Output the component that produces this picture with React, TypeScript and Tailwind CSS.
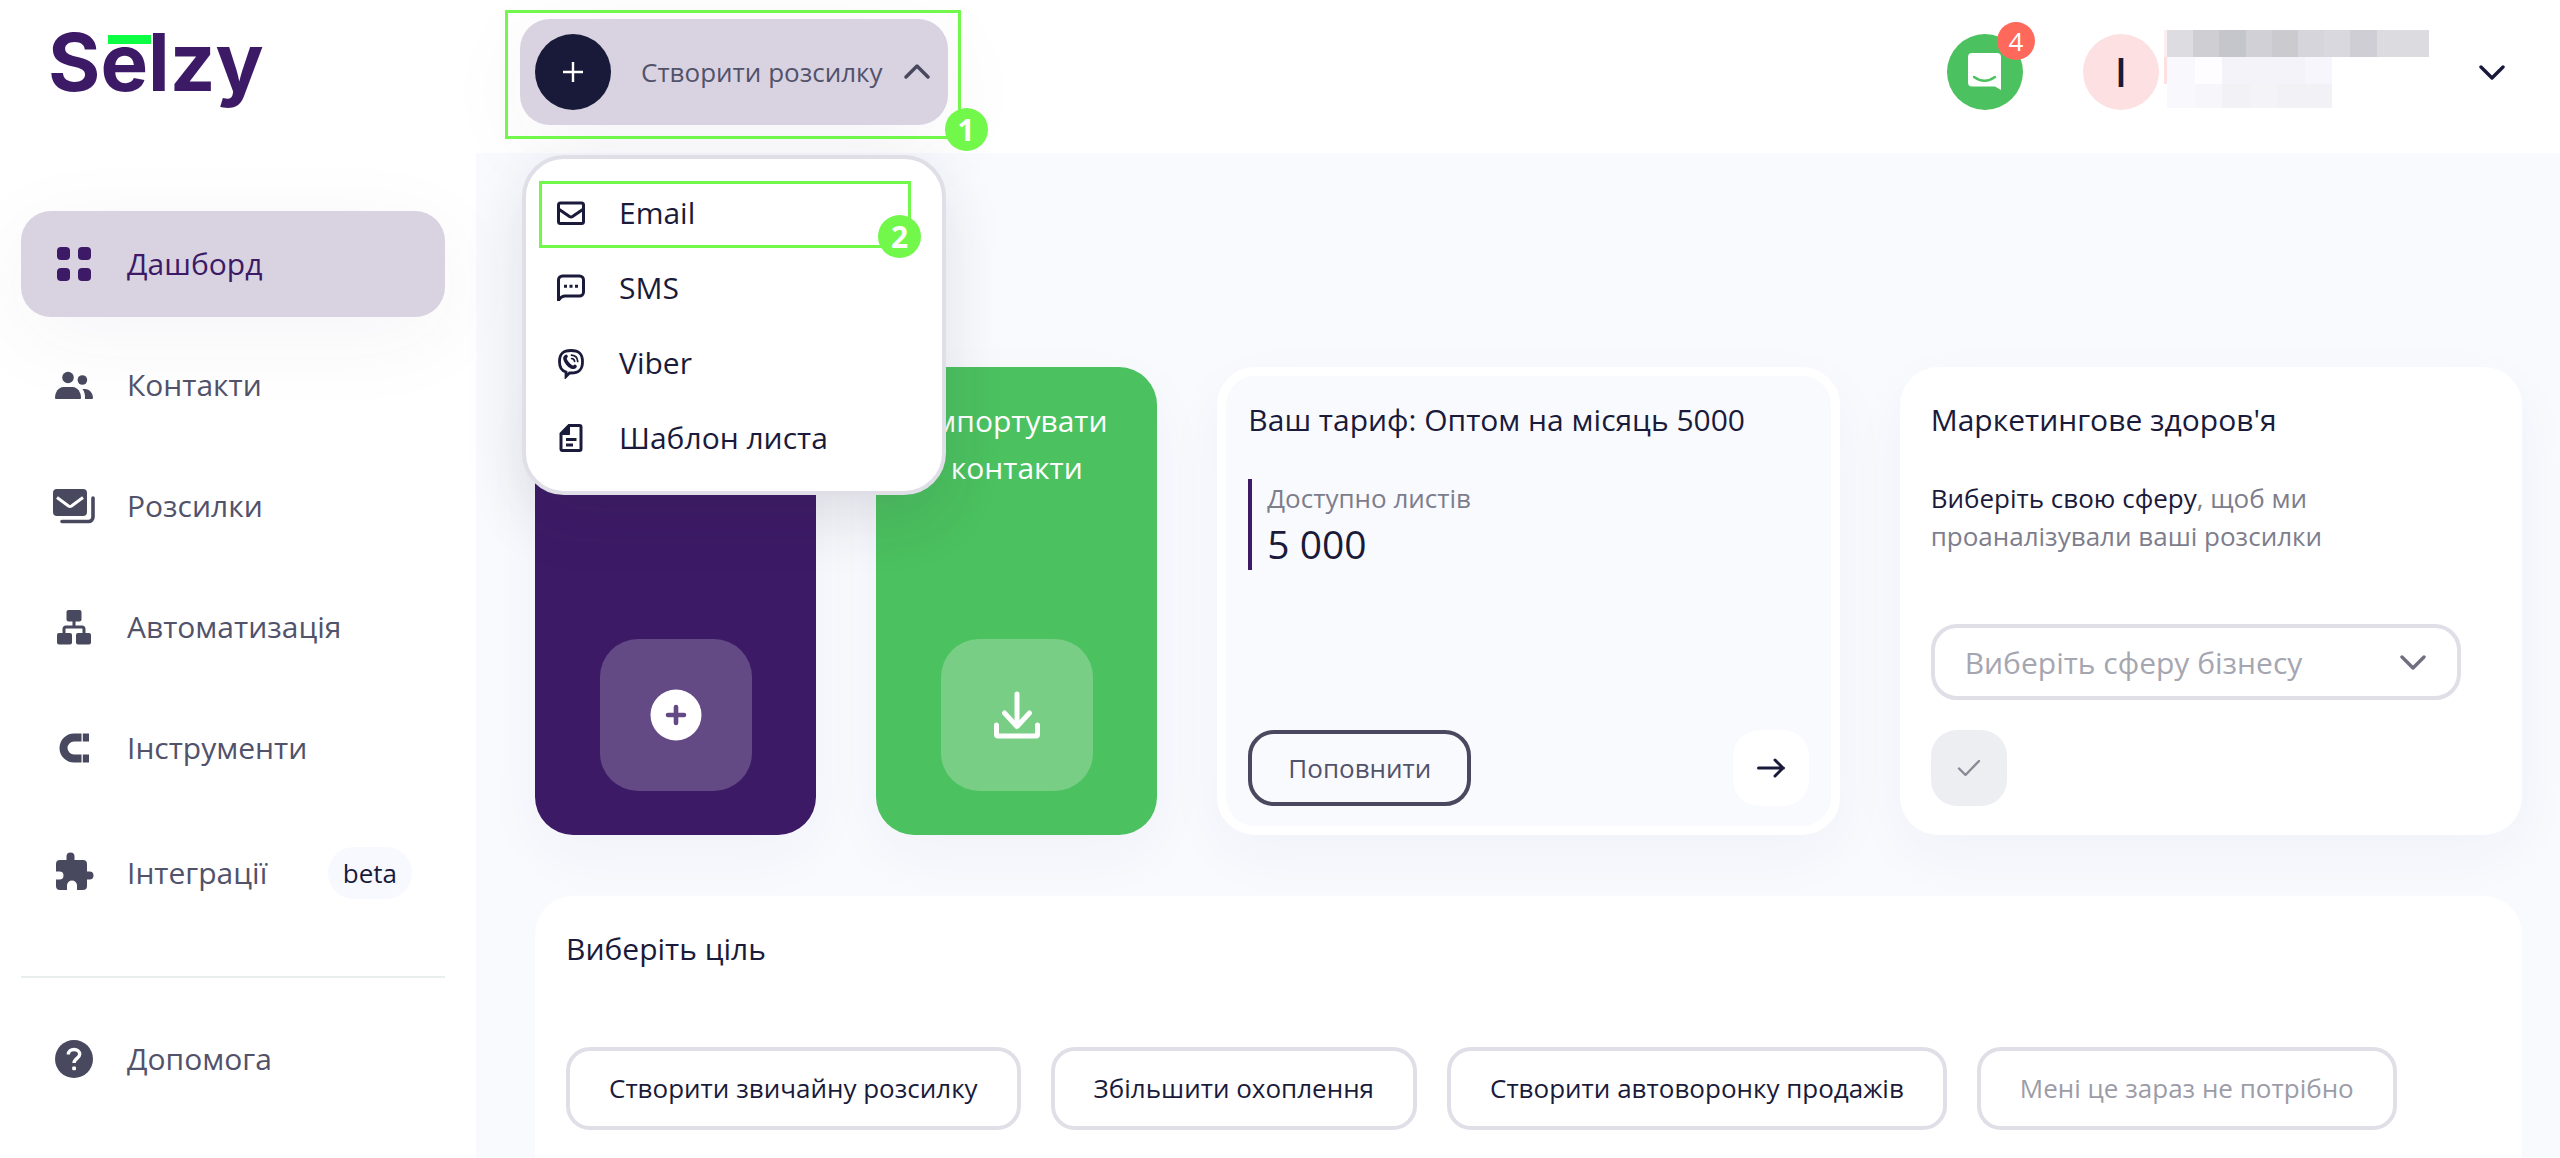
import { useState } from 'react'
import type { ReactNode } from 'react'
import clsx from 'clsx'

interface IconProps {
  className?: string
}

interface NavItem {
  label: string
  icon: ReactNode
  badge?: string
}

// --- Іконки бічного меню ---

function DashboardIcon() {
  return (
    <svg className="size-10 shrink-0" viewBox="0 0 40 40" fill="currentColor">
      <rect x="3" y="3" width="13" height="13" rx="4" />
      <rect x="24" y="3" width="13" height="13" rx="4" />
      <rect x="3" y="24" width="13" height="13" rx="4" />
      <rect x="24" y="24" width="13" height="13" rx="4" />
    </svg>
  )
}

function ContactsIcon() {
  return (
    <svg className="size-10 shrink-0" viewBox="0 0 40 40" fill="currentColor">
      <circle cx="14" cy="12.5" r="5.8" />
      <circle cx="28.4" cy="15" r="4.8" />
      <path d="M1 33c0-6 3.500-11 8.500-11h9c5 0 8.500 5 8.500 11a1 1 0 0 1-1 1H2a1 1 0 0 1-1-1z" />
      <path d="M28.500 24h2.500c4.500 0 8 4 8 9a1 1 0 0 1-1 1h-7c.3-4-.5-7.500-2.500-10z" />
    </svg>
  )
}

function MailingsIcon() {
  return (
    <svg className="size-11 shrink-0" viewBox="0 0 44 44">
      <rect x="1" y="5" width="34" height="27" rx="4" fill="currentColor" />
      <path d="M5 13.500l11.500 8.500q1.500 1 3 0L31 13.500" fill="none" stroke="#fff" strokeWidth="3" />
      <path
        d="M41 14v19a4.500 4.500 0 0 1-4.500 4.500H10"
        fill="none"
        stroke="currentColor"
        strokeWidth="3.600"
        strokeLinecap="round"
      />
    </svg>
  )
}

function AutomationIcon() {
  return (
    <svg className="size-10 shrink-0" viewBox="0 0 40 40" fill="currentColor">
      <rect x="12.500" y="3" width="15" height="11.500" rx="2" />
      <rect x="3" y="26" width="15" height="11.500" rx="2" />
      <rect x="22" y="26" width="15" height="11.500" rx="2" />
      <path d="M20 13v7M10 27v-5a2 2 0 0 1 2-2h16a2 2 0 0 1 2 2v5" fill="none" stroke="currentColor" strokeWidth="3" />
    </svg>
  )
}

function ToolsIcon() {
  return (
    <svg className="size-10 shrink-0" viewBox="0 0 40 40" fill="none" stroke="currentColor" strokeWidth="8">
      <path d="M27.500 9.500H20a10.500 10.500 0 0 0 0 21h7.500" />
      <path d="M28.800 9.500H35M28.800 30.500H35" />
    </svg>
  )
}

function IntegrationsIcon() {
  return (
    <svg className="size-11 shrink-0" viewBox="0 0 44 44" fill="currentColor">
      <path d="M14.500 9V5.500a4 4 0 0 1 8 0V9H31a4 4 0 0 1 4 4v7.500h2.500a4 4 0 0 1 0 8H35V35a4 4 0 0 1-4 4h-6v-4.500a5 5 0 0 0-10 0V39H8a4 4 0 0 1-4-4v-6.500h3.500a4 4 0 0 0 0-8H4V13a4 4 0 0 1 4-4z" />
    </svg>
  )
}

function HelpIcon() {
  return (
    <svg className="size-10 shrink-0" viewBox="0 0 40 40">
      <circle cx="20" cy="20" r="19" fill="currentColor" />
      <path
        d="M14.300 15.500c0-3.300 2.600-5 5.700-5s5.700 1.800 5.700 4.800c0 4-5.700 4.200-5.700 8.700"
        fill="none"
        stroke="#fff"
        strokeWidth="3.400"
      />
      <rect x="18.200" y="27.500" width="3.800" height="3.800" rx="1" fill="#fff" />
    </svg>
  )
}

// --- Іконки випадного меню ---

function EmailIcon() {
  return (
    <svg className="size-8 shrink-0" viewBox="0 0 32 32" fill="none" stroke="currentColor" strokeWidth="3">
      <rect x="3.500" y="6" width="25" height="20.500" rx="2" />
      <path d="M3.500 12l11 7.600q1.500 1 3 0l11-7.600" />
    </svg>
  )
}

function SmsIcon() {
  return (
    <svg className="size-8 shrink-0" viewBox="0 0 32 32" fill="none" stroke="currentColor" strokeWidth="3">
      <path d="M3.500 29V8a4 4 0 0 1 4-4h17a4 4 0 0 1 4 4v12a4 4 0 0 1-4 4H10q-3.500 0-6.500 4z" />
      <path d="M9 14.200h3M14.500 14.200h3M20 14.200h3" />
    </svg>
  )
}

function ViberIcon() {
  return (
    <svg className="size-8 shrink-0" viewBox="0 0 32 32" fill="none" stroke="currentColor">
      <path
        d="M16 3.500c7.500 0 11.500 2.500 11.500 11.200S23.500 26 16 26h-1.500L11 29.500V25c-4.600-1.300-6.500-4.500-6.500-10.300C4.500 6 8.500 3.500 16 3.500z"
        strokeWidth="2.800"
      />
      <path d="M11 9.500c-2 1.200-.8 4.200 1.500 7s5.800 5 7.500 2.800" strokeWidth="3.600" strokeLinecap="round" />
      <path d="M16.500 8.200c3.800.3 6 2.500 6.200 6.300M16.700 11.500c1.800.2 2.700 1.100 2.900 2.900" strokeWidth="1.700" strokeLinecap="round" />
    </svg>
  )
}

function TemplateIcon() {
  return (
    <svg className="size-8 shrink-0" viewBox="0 0 32 32" fill="none" stroke="currentColor" strokeWidth="3">
      <path d="M14 3.500h10.500a1.500 1.500 0 0 1 1.500 1.500v22a1.500 1.500 0 0 1-1.500 1.500h-17A1.500 1.500 0 0 1 6 27V11.500z" />
      <path d="M14.500 3v9.500H5.500z" fill="currentColor" strokeWidth="1" />
      <path d="M11 17.500h10.500M11 23h7" />
    </svg>
  )
}

function ChevronIcon({ className }: IconProps) {
  return (
    <svg className={clsx('h-[18px] w-[26px] shrink-0', className)} viewBox="0 0 26 18" fill="none" stroke="currentColor">
      <path d="M2 4l11 11L24 4" strokeWidth="3.400" strokeLinecap="round" strokeLinejoin="round" />
    </svg>
  )
}

const NAV_ITEMS: NavItem[] = [
  { label: 'Дашборд', icon: <DashboardIcon /> },
  { label: 'Контакти', icon: <ContactsIcon /> },
  { label: 'Розсилки', icon: <MailingsIcon /> },
  { label: 'Автоматизація', icon: <AutomationIcon /> },
  { label: 'Інструменти', icon: <ToolsIcon /> },
  { label: 'Інтеграції', icon: <IntegrationsIcon />, badge: 'beta' },
]

const MENU_ITEMS = [
  { label: 'Email', icon: <EmailIcon /> },
  { label: 'SMS', icon: <SmsIcon /> },
  { label: 'Viber', icon: <ViberIcon /> },
  { label: 'Шаблон листа', icon: <TemplateIcon /> },
]

const GOALS = [
  { label: 'Створити звичайну розсилку' },
  { label: 'Збільшити охоплення' },
  { label: 'Створити автоворонку продажів' },
  { label: 'Мені це зараз не потрібно', muted: true },
]

function NavLink({ item, active }: { item: NavItem; active?: boolean }) {
  return (
    <a
      href="#"
      className={clsx(
        'flex items-center rounded-[30px] py-[31px] pr-[33px] pl-[31px] text-[30px] leading-[44px]',
        active ? 'bg-[#d9d3e1] text-[#3d1a66] shadow-[0_20px_90px_rgba(60,50,110,0.05)]' : 'text-[#52526b]'
      )}
    >
      <span className={clsx('flex w-11 justify-center', !active && 'text-[#48485f]')}>{item.icon}</span>
      <span className="ml-[31px]">{item.label}</span>
      {item.badge && (
        <span className="ml-auto flex h-[52px] items-center rounded-full bg-[#f8f9fe] px-[15px] text-[26px] text-[#1a1a3a]">
          {item.badge}
        </span>
      )}
    </a>
  )
}

function Sidebar() {
  return (
    <aside className="flex w-[476px] shrink-0 flex-col bg-white pr-[31px] pl-[21px]">
      <a
        href="#"
        className="relative mt-1 mb-[91px] ml-[27px] self-start font-['Inter',sans-serif] text-[80px] leading-[116px] font-bold text-[#3d1a66]"
      >
        Selzy
        <span className="absolute top-[31px] left-[60px] h-[9px] w-[43px] bg-[#0dff43]" />
      </a>
      <nav className="flex flex-col gap-[15px]">
        {NAV_ITEMS.map((item, i) => (
          <NavLink key={item.label} item={item} active={i === 0} />
        ))}
      </nav>
      <hr className="mt-[46px] mb-7 border-t-2 border-[#e9eeef]" />
      <NavLink item={{ label: 'Допомога', icon: <HelpIcon /> }} />
    </aside>
  )
}

function StepBadge({ n, className }: { n: number; className: string }) {
  return (
    <span
      className={clsx(
        'absolute flex size-[43px] items-center justify-center rounded-full bg-[#72f84b] text-[30px] leading-none font-bold text-white',
        className
      )}
    >
      {n}
    </span>
  )
}

function CreateMenu() {
  const [open, setOpen] = useState(true)

  return (
    <div className="relative z-10">
      <button
        onClick={() => setOpen(!open)}
        aria-expanded={open}
        className="flex h-[106px] items-center rounded-[30px] bg-[#d9d3e1] pr-[18px] pl-[15px] text-[26px] text-[#52526b] shadow-[0_20px_90px_rgba(60,50,110,0.05)]"
      >
        <span className="flex size-[76px] items-center justify-center rounded-full bg-[#191a39]">
          <svg className="size-5" viewBox="0 0 20 20" stroke="#fff" strokeWidth="2.400">
            <path d="M10 0v20M0 10h20" />
          </svg>
        </span>
        <span className="mr-[21px] ml-[30px]">Створити розсилку</span>
        <ChevronIcon className={clsx('text-[#48485f]', open && 'rotate-180')} />
      </button>

      {/* Крок 1 */}
      <div className="pointer-events-none absolute -top-[9px] -right-[13px] -bottom-[14px] -left-[15px] border-[3px] border-[#72f84b]">
        <StepBadge n={1} className="-right-[30px] -bottom-[15px]" />
      </div>

      {open && (
        <ul className="absolute top-[136px] left-0.5 w-[424px] rounded-[42px] border-4 border-[#e0dfe8] bg-white py-4 shadow-[0_24px_60px_rgba(40,40,60,0.12)]">
          {MENU_ITEMS.map((item, i) => (
            <li key={item.label} className="relative">
              <button className="flex h-[75px] w-full items-center gap-8 pl-[29px] text-left text-[30px] text-[#1a1a3a]">
                {item.icon}
                {item.label}
              </button>
              {/* Крок 2 */}
              {i === 0 && (
                <div className="pointer-events-none absolute top-1.5 right-[31px] bottom-0.5 left-[13px] border-[3px] border-[#72f84b]">
                  <StepBadge n={2} className="-right-[13px] -bottom-[13px]" />
                </div>
              )}
            </li>
          ))}
        </ul>
      )}
    </div>
  )
}

// Приховані дані користувача
function HiddenAccount() {
  return (
    <div className="flex w-[265px] flex-col pb-1.5" aria-hidden="true">
      <div className="flex h-[27px] border-l-[3px] border-[#fdeeef]">
        <i className="flex-1 bg-[#dddce1]" />
        <i className="flex-1 bg-[#cfced3]" />
        <i className="flex-1 bg-[#c5c6cb]" />
        <i className="flex-1 bg-[#d1d0d6]" />
        <i className="flex-1 bg-[#cacacf]" />
        <i className="flex-1 bg-[#d6d5db]" />
        <i className="flex-1 bg-[#d9d8de]" />
        <i className="flex-1 bg-[#cfced4]" />
        <i className="flex-1 bg-[#dcdbe0]" />
        <i className="flex-1 bg-[#dcdbe0]" />
      </div>
      <div className="flex h-[27px] w-[168px] border-l-[3px] border-[#fde1e2]">
        <i className="flex-1 bg-[#f9f8fd]" />
        <i className="flex-1 bg-[#fefdff]" />
        <i className="flex-1 bg-[#f4f3f9]" />
        <i className="flex-1 bg-[#f4f3f9]" />
        <i className="flex-1 bg-[#f3f3f9]" />
        <i className="flex-1 bg-[#f6f6fc]" />
      </div>
      <div className="flex h-6 w-[168px] border-l-[3px] border-white">
        <i className="flex-1 bg-[#f9f9fd]" />
        <i className="flex-1 bg-[#f7f7fb]" />
        <i className="flex-1 bg-[#f2f2f6]" />
        <i className="flex-1 bg-[#f4f4f8]" />
        <i className="flex-1 bg-[#f2f2f6]" />
        <i className="flex-1 bg-[#f2f2f6]" />
      </div>
    </div>
  )
}

function Header() {
  return (
    <header className="flex h-[153px] items-start justify-between bg-white pt-[19px] pr-[55px] pl-11">
      <CreateMenu />
      <div className="flex h-[106px] items-center">
        <button className="relative size-[76px] rounded-full bg-[#4bc15f]" aria-label="Чат">
          <svg className="size-[76px]" viewBox="0 0 76 76">
            <path d="M25 19h25a4 4 0 0 1 4 4v33l-6-3.500H25a4 4 0 0 1-4-4V23a4 4 0 0 1 4-4z" fill="#fff" />
            <path d="M27 43q10.500 7.500 21 0" fill="none" stroke="#4bc15f" strokeWidth="2.400" strokeLinecap="round" />
          </svg>
          <span className="absolute -top-3 -right-3 flex size-[38px] items-center justify-center rounded-full bg-[#ff695c] text-[26px] leading-none text-white">
            4
          </span>
        </button>
        <button className="ml-[60px] flex items-center" aria-label="Акаунт">
          <span className="flex size-[76px] items-center justify-center rounded-full bg-[#fde1e2] text-[39px] font-semibold text-[#1a1a3a]">
            І
          </span>
          <span className="mr-[50px] ml-[5px]">
            <HiddenAccount />
          </span>
          <ChevronIcon className="text-[#191a39]" />
        </button>
      </div>
    </header>
  )
}

function TariffCard() {
  return (
    <section className="col-span-2 flex flex-col rounded-[38px] border-[9px] border-white bg-[#f9fafe] px-[22px] pt-[21px] pb-5 shadow-[0_20px_60px_rgba(60,60,90,0.04)]">
      <h2 className="text-[30px] leading-[46px] font-medium">Ваш тариф: Оптом на місяць 5000</h2>
      <div className="mt-9 border-l-4 border-[#3d1a66] pl-[15px]">
        <p className="text-[26px] leading-[38px] text-[#7d7d8c]">Доступно листів</p>
        <p className="text-[39px] leading-[53px]">5 000</p>
      </div>
      <div className="mt-auto flex items-center justify-between">
        <button className="h-[76px] rounded-[26px] border-4 border-[#48485f] px-9 text-[26px] text-[#52526b]">
          Поповнити
        </button>
        <button className="flex size-[76px] items-center justify-center rounded-[26px] bg-white" aria-label="Докладніше">
          <svg className="size-7" viewBox="0 0 28 28" fill="none" stroke="currentColor" strokeWidth="3">
            <path d="M1.500 14h25M18 6l8 8-8 8" strokeLinecap="round" strokeLinejoin="round" />
          </svg>
        </button>
      </div>
    </section>
  )
}

function HealthCard() {
  return (
    <section className="col-span-2 flex flex-col rounded-[38px] bg-white px-[31px] pt-[30px] pb-[29px] shadow-[0_20px_60px_rgba(60,60,90,0.04)]">
      <h2 className="text-[30px] leading-[46px] font-medium">Маркетингове здоров'я</h2>
      <p className="mt-9 text-[26px] leading-[38px] text-[#7d7d8c]">
        <a href="#" className="text-[#1a1a3a]">Виберіть свою сферу</a>, щоб ми
        <br />
        проаналізували ваші розсилки
      </p>
      <div className="relative mt-auto mr-[30px]">
        <select
          aria-label="Сфера бізнесу"
          className="h-[76px] w-full appearance-none rounded-[26px] border-4 border-[#e0dfe8] bg-white px-[30px] text-[30px] text-[#a6a6b1]"
        >
          <option>Виберіть сферу бізнесу</option>
        </select>
        <ChevronIcon className="pointer-events-none absolute top-[29px] right-[35px] text-[#6f6f80]" />
      </div>
      <button
        className="mt-[30px] flex size-[76px] items-center justify-center rounded-[26px] bg-[#edeef2]"
        aria-label="Підтвердити"
      >
        <svg className="size-6" viewBox="0 0 24 24" fill="none" stroke="#8a8a95" strokeWidth="2.400">
          <path d="M2 12.500l6.500 6.500L22 5" strokeLinecap="round" strokeLinejoin="round" />
        </svg>
      </button>
    </section>
  )
}

export default function App() {
  return (
    <div className="flex min-h-screen bg-[#f9fafe] font-['Open_Sans',sans-serif] text-[#1a1a3a]">
      <Sidebar />
      <div className="flex min-w-0 flex-1 flex-col">
        <Header />
        <main className="flex flex-1 flex-col pt-[214px] pr-[38px] pl-[59px]">
          <div className="grid min-h-[468px] grid-cols-6 gap-15">
            <button
              aria-label="Створити"
              className="flex flex-col items-center justify-end rounded-[38px] bg-[#3d1a66] pb-[44px] shadow-[0_20px_60px_rgba(60,60,90,0.04)]"
            >
              <span className="flex size-[152px] items-center justify-center rounded-[38px] bg-[#634a85]">
                <svg className="size-[52px]" viewBox="0 0 52 52">
                  <circle cx="26" cy="26" r="25.500" fill="#fff" />
                  <path d="M26 18v16M18 26h16" stroke="#634a85" strokeWidth="4.600" strokeLinecap="round" />
                </svg>
              </span>
            </button>
            <button className="flex flex-col items-center justify-between rounded-[38px] bg-[#4bc15f] pt-[30px] pb-[44px] text-[30px] leading-[47px] font-medium text-white shadow-[0_20px_60px_rgba(60,60,90,0.04)]">
              <span>
                Імпортувати
                <br />
                контакти
              </span>
              <span className="flex size-[152px] items-center justify-center rounded-[38px] bg-[#78ce84]">
                <svg
                  className="size-[52px]"
                  viewBox="0 0 52 52"
                  fill="none"
                  stroke="#fff"
                  strokeWidth="5"
                  strokeLinecap="round"
                  strokeLinejoin="round"
                >
                  <path d="M26 5v32M13.500 24L26 37.500 38.500 24M5.500 36v9.500a1.500 1.500 0 0 0 1.500 1.500h38a1.500 1.500 0 0 0 1.500-1.500V36" />
                </svg>
              </span>
            </button>
            <TariffCard />
            <HealthCard />
          </div>

          {/* Вибір цілі */}
          <section className="mt-[61px] flex-1 rounded-t-[38px] bg-white px-[31px] pt-[30px]">
            <h2 className="text-[30px] leading-[46px] font-medium">Виберіть ціль</h2>
            <div className="mt-[75px] flex flex-wrap gap-[30px]">
              {GOALS.map((goal) => (
                <button
                  key={goal.label}
                  className={clsx(
                    'h-[83px] rounded-[24px] border-4 border-[#e0dfe8] px-[39px] text-[26px]',
                    goal.muted && 'text-[#9c9ca8]'
                  )}
                >
                  {goal.label}
                </button>
              ))}
            </div>
          </section>
        </main>
      </div>
    </div>
  )
}
